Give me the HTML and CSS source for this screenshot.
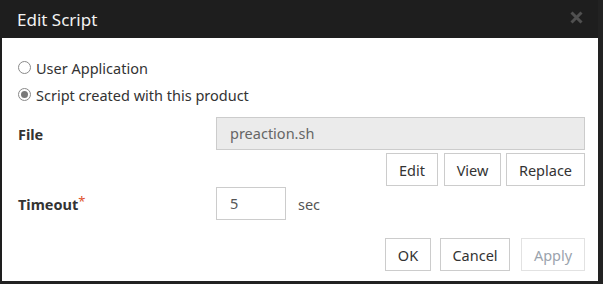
FILE: index.html
```html
<!DOCTYPE html>
<html lang="en">
<head>
    <meta charset="UTF-8">
    <title>Edit Script</title>
    <link rel="stylesheet" href="styles.css">
</head>
<body>
    <div class="dialog">
        <header class="dialog-header">
            <h1>Edit Script</h1>
            <svg class="close" width="13" height="13" viewBox="0 0 13 13">
                <path d="M1.5 1.5 L11.5 11.5 M11.5 1.5 L1.5 11.5" stroke="#505050" stroke-width="3"/>
            </svg>
        </header>

        <div class="dialog-body">
            <label class="radio-row">
                <span class="radio"></span>
                User Application
            </label>
            <label class="radio-row">
                <span class="radio checked"></span>
                Script created with this product
            </label>

            <div class="field field-file">
                <span class="field-label">File</span>
                <div class="input wide disabled">preaction.sh</div>
            </div>
            <div class="btn-row">
                <button class="btn btn-edit">Edit</button>
                <button class="btn btn-view">View</button>
                <button class="btn btn-replace">Replace</button>
            </div>

            <div class="field field-timeout">
                <span class="field-label">Timeout<sup class="req">*</sup></span>
                <div class="input short">5</div>
                <span class="unit">sec</span>
            </div>

            <div class="dialog-footer">
                <button class="btn btn-ok">OK</button>
                <button class="btn btn-cancel">Cancel</button>
                <button class="btn btn-apply" disabled>Apply</button>
            </div>
        </div>
    </div>
</body>
</html>
```

FILE: styles.css
```css
/* Global */
body {
    margin: 0;
    background-color: #222222;
    font-family: 'Noto Sans', 'Liberation Sans', sans-serif;
    font-size: 14.5px;
    color: #333333;
}

.dialog {
    width: 598px;
    height: 281px;
    background-color: #1e1e1e;
}

/* Header */
.dialog-header {
    height: 38px;
    display: flex;
    align-items: center;
    justify-content: space-between;
    padding: 0 15px 0 17px;
}

.dialog-header h1 {
    margin: 0;
    font-size: 17px;
    font-weight: normal;
    color: #f2f2f2;
}

.close {
    display: block;
    margin-top: -3px;
}

/* Body */
.dialog-body {
    margin-left: 2px;
    height: 243px;
    box-sizing: border-box;
    background-color: #ffffff;
    padding: 16px 13px 0 16px;
}

.radio-row {
    display: flex;
    align-items: center;
    gap: 5px;
    height: 27px;
}

.radio {
    width: 11px;
    height: 11px;
    border: 1px solid #8a8a8a;
    border-radius: 50%;
    display: flex;
    align-items: center;
    justify-content: center;
}

.radio.checked::after {
    content: '';
    width: 7px;
    height: 7px;
    border-radius: 50%;
    background-color: #7a7a7a;
}

.field {
    display: flex;
    align-items: center;
}

.field-file {
    margin-top: 9px;
}

.field-timeout {
    margin-top: 1px;
}

.field-label {
    width: 198px;
    font-weight: bold;
}

.req {
    color: #e0502d;
    font-weight: normal;
    font-size: 13px;
    vertical-align: 4px;
    line-height: 0;
}

.input {
    height: 31px;
    line-height: 31px;
    border: 1px solid #cccccc;
    padding: 0 13px;
    box-sizing: content-box;
    color: #555555;
}

.input.wide {
    flex: 1;
}

.input.disabled {
    background-color: #ebebeb;
    color: #666666;
}

.input.short {
    width: 42px;
}

.unit {
    margin-left: 12px;
    color: #555555;
}

/* Buttons */
.btn-row, .dialog-footer {
    display: flex;
    justify-content: flex-end;
}

.btn-row {
    margin-top: 3px;
    gap: 5px;
}

.btn {
    height: 33px;
    background-color: #ffffff;
    border: 1px solid #cccccc;
    font-family: inherit;
    font-size: 14.5px;
    color: #333333;
    padding: 0;
}

.btn-edit { width: 52px; }
.btn-view { width: 57px; margin-left: 1px; }
.btn-replace { width: 79px; }

.dialog-footer {
    margin-top: 18px;
}

.btn-ok { width: 46px; }
.btn-cancel { width: 70px; margin-left: 9px; }
.btn-apply { width: 64px; margin-left: 11px; }

.btn:disabled {
    border-color: #e2e2e2;
    color: #9aa3ad;
}
```
